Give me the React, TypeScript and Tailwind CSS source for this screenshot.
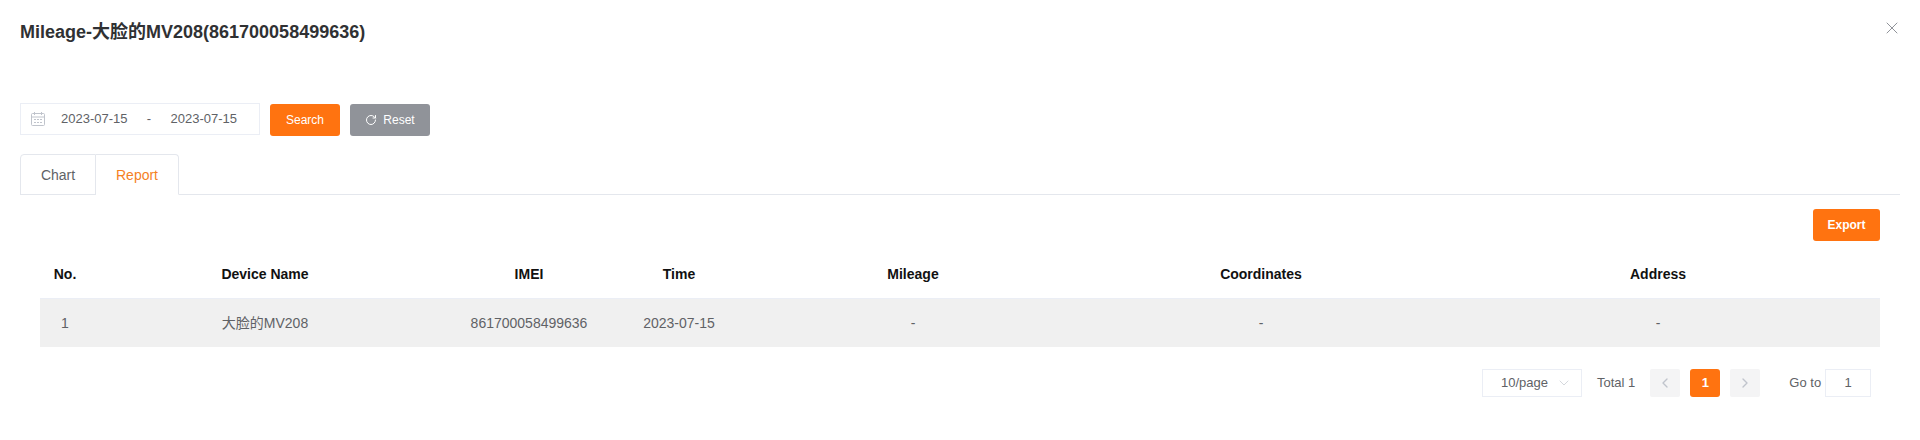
import { RotateCw, X, ChevronLeft, ChevronRight, ChevronDown } from "lucide-react"

const columns = ["No.", "Device Name", "IMEI", "Time", "Mileage", "Coordinates", "Address"]
const row = ["1", "大脸的MV208", "861700058499636", "2023-07-15", "-", "-", "-"]

function CalendarIcon() {
  return (
    <svg width="14" height="14" viewBox="0 0 14 14" fill="none" stroke="#c0c4cc" strokeWidth="1">
      <rect x="0.5" y="1.5" width="13" height="12" rx="1" />
      <path d="M0.5 5h13" />
      <path d="M3.5 0v3M10.5 0v3" />
      <path d="M3 7.5h2M6 7.5h2M9 7.5h2M3 10.5h2M6 10.5h2M9 10.5h2" />
    </svg>
  )
}

export default function App() {
  return (
    <div className="w-[1920px] h-[440px] overflow-hidden bg-white font-['Liberation_Sans','Noto_Sans_CJK_SC',sans-serif]">
      <div className="flex items-start justify-between pl-5 pr-[18px] pt-[21px]">
        <h1 className="text-lg leading-[22px] font-bold text-[#303133]">Mileage-大脸的MV208(861700058499636)</h1>
        <X size={20} strokeWidth={1.2} className="-mt-[3px] text-[#909399]" />
      </div>

      <div className="flex items-start gap-2.5 pl-5 mt-[60px]">
        <div className="flex items-center w-[240px] h-8 border border-[#ebeef5] text-[13px] text-[#606266]">
          <span className="ml-[10px] w-[30px]"><CalendarIcon /></span>
          <span>2023-07-15</span>
          <span className="w-[43px] text-center">-</span>
          <span>2023-07-15</span>
        </div>
        <button className="mt-px w-[70px] h-8 rounded-[3px] bg-[#ff7310] text-xs text-white">Search</button>
        <button className="mt-px flex items-center justify-center gap-[6px] w-20 h-8 rounded-[3px] bg-[#909399] text-xs text-white">
          <RotateCw size={12} strokeWidth={2} />
          Reset
        </button>
      </div>

      <div className="flex mx-5 mt-[18px] h-[41px] border-b border-[#e4e7ed] text-sm">
        <div className="flex items-center justify-center w-[76px] h-[41px] border border-[#e4e7ed] rounded-tl-[4px] text-[#606266]">Chart</div>
        <div className="flex items-center justify-center w-[83px] h-[41px] border border-l-0 border-b-white border-[#e4e7ed] rounded-tr-[4px] text-[#f5811f]">Report</div>
      </div>

      <div className="flex justify-end pr-10 mt-[14px]">
        <button className="w-[67px] h-8 rounded-[3px] bg-[#ff7310] text-xs font-bold text-white">Export</button>
      </div>

      <div className="px-10 mt-[9px]">
        <table className="w-full table-fixed border-collapse text-sm">
          <colgroup>
            <col className="w-[50px]" />
            <col className="w-[350px]" />
            <col className="w-[178px]" />
            <col className="w-[122px]" />
            <col className="w-[346px]" />
            <col className="w-[350px]" />
            <col className="w-[444px]" />
          </colgroup>
          <thead>
            <tr className="h-12 border-b border-[#ebeef5]">
              {columns.map((c) => (
                <th key={c} className="font-bold text-[#111111] text-center">{c}</th>
              ))}
            </tr>
          </thead>
          <tbody>
            <tr className="h-[49px] bg-[#f0f0f0]">
              {row.map((c, i) => (
                <td key={i} className="text-center text-[#606266]">{c}</td>
              ))}
            </tr>
          </tbody>
        </table>
      </div>

      <div className="flex items-center mt-[22px] pl-[1482px] text-[13px] text-[#606266]">
        <div className="relative flex items-center w-[100px] h-7 pl-[18px] border border-[#ebeef5]">
          10/page
          <ChevronDown size={16} strokeWidth={1} className="absolute right-[9px] text-[#c0c4cc]" />
        </div>
        <span className="ml-[15px]">Total 1</span>
        <div className="flex items-center justify-center ml-[15px] w-[30px] h-7 rounded-[2px] bg-[#f4f4f5] text-[#c0c4cc]">
          <ChevronLeft size={16} strokeWidth={2} />
        </div>
        <div className="flex items-center justify-center ml-[10px] w-[30px] h-7 rounded-[3px] bg-[#ff7310] font-bold text-white">1</div>
        <div className="flex items-center justify-center ml-[10px] w-[30px] h-7 rounded-[2px] bg-[#f4f4f5] text-[#c0c4cc]">
          <ChevronRight size={16} strokeWidth={2} />
        </div>
        <span className="ml-[29px]">Go to</span>
        <div className="flex items-center justify-center ml-1 w-[46px] h-7 border border-[#ebeef5]">1</div>
      </div>
    </div>
  )
}
